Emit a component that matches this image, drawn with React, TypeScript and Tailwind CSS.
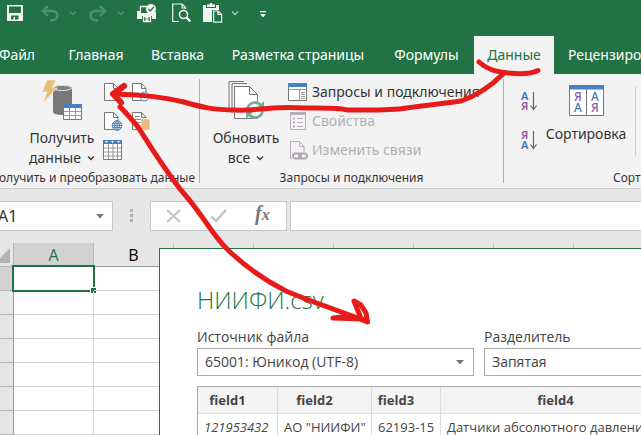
import type { ReactNode } from "react";

const tabs = [
  { label: "Файл", className: "w-[54px] pr-5" },
  { label: "Главная", className: "w-[84px]" },
  { label: "Вставка", className: "w-[79px]" },
  { label: "Разметка страницы", className: "w-[162px]" },
  { label: "Формулы", className: "w-[95px]" },
  { label: "Данные", className: "w-[80px]", active: true },
  { label: "Рецензирование", className: "px-3.5" },
];

const Chevron = ({ className = "" }: { className?: string }) => (
  <svg viewBox="0 0 8 6" className={`w-2 h-1.5 shrink-0 ${className}`} fill="none" stroke="currentColor" strokeWidth="1.3">
    <path d="M1 1.5l3 3 3-3" />
  </svg>
);

/* Quick access toolbar */
const QuickAccess = () => (
  <div className="flex items-center h-9 pb-2.5 pl-[7px] text-white">
    <button aria-label="Сохранить">
      <svg viewBox="0 0 16 16" className="w-4 h-4">
        <path fill="#f3f3f3" fillRule="evenodd" d="M0 0h16v16H0zM2 1.500v6.500h12v-6.500zM4 10.500v4h2.500v-2.500h1.500v2.500h3.500v-4z" />
      </svg>
    </button>
    <button aria-label="Отменить" className="flex items-center gap-2.5 ml-[18px] text-[#4f8f6b]">
      <svg viewBox="0 0 18 17" className="w-[18px] h-[17px]" fill="none" stroke="currentColor" strokeWidth="2.4">
        <path d="M7 1L2 6l5 5M2 6h9c3.500 0 5.500 2 5.500 4.800S14 15.500 9 15.500" />
      </svg>
      <Chevron />
    </button>
    <button aria-label="Вернуть" className="flex items-center gap-2.5 ml-3 text-[#4f8f6b]">
      <svg viewBox="0 0 18 17" className="w-[18px] h-[17px]" fill="none" stroke="currentColor" strokeWidth="2.4">
        <path d="M11 1l5 5-5 5M16 6H7C3.500 6 1.500 8 1.500 10.800S4 15.500 9 15.500" />
      </svg>
      <Chevron />
    </button>
    <button aria-label="Быстрая печать" className="ml-3">
      <svg viewBox="0 0 20 19" className="w-5 h-[19px]">
        <path fill="#f3f3f3" d="M0 7h4v2h11v-1h4v7h-4v-3H5v3H0z" />
        <path fill="none" stroke="#f3f3f3" strokeWidth="1.3" d="M3.500 7V2.500H10M6.500 12.500h7v5h-7zM8.500 14h3M8.500 16h3" />
        <circle cx="14" cy="5" r="5" fill="#f3f3f3" />
        <path fill="none" stroke="#217346" strokeWidth="1.4" d="M11.300 5l2 2 3.500-4" />
      </svg>
    </button>
    <button aria-label="Предварительный просмотр" className="ml-[15px]">
      <svg viewBox="0 0 19 20" className="w-[19px] h-5" fill="none" stroke="#f3f3f3">
        <path strokeWidth="1.2" d="M7 18.500H.700V1H10l3.500 3.500V6M10 1v4h4" />
        <circle cx="11.500" cy="11.500" r="4" strokeWidth="1.600" />
        <path strokeWidth="2.400" d="M14.500 14.500l3.700 4" />
      </svg>
    </button>
    <button aria-label="Вставить" className="flex items-center gap-2 ml-3">
      <svg viewBox="0 0 20 20" className="w-5 h-5">
        <path fill="#f3f3f3" d="M0 2h3v3h10V2h3v5H9v12H0z" />
        <path fill="#f3f3f3" d="M4 1.500h2.500C6.500-.5 9.500-.5 9.500 1.500H12V4H4z" />
        <path fill="none" stroke="#f3f3f3" strokeWidth="1.2" d="M10.600 8h4.500l3.500 3.500v7.700h-8zM15 8v3.500h3.500" />
      </svg>
      <Chevron className="text-[#a9cbb8]" />
    </button>
    <button aria-label="Настройка панели" className="ml-5">
      <svg viewBox="0 0 8 8" className="w-2 h-2 mt-1" fill="#f3f3f3">
        <path d="M1 0h6v1.200H1zM1 3h6L4 6.500z" />
      </svg>
    </button>
  </div>
);

const Group = ({ label, className, labelClass, children }: { label: string; className: string; labelClass: string; children: ReactNode }) => (
  <section className={`flex flex-col h-full ${className}`}>
    <div className="flex h-[94px] pt-1.5">{children}</div>
    <div className={`flex text-xs leading-5 whitespace-nowrap ${labelClass}`}>
      <span>{label}</span>
    </div>
  </section>
);

const Divider = () => <div className="w-px h-[104px] mt-[5px] bg-[#b0b0b0] shrink-0" />;

const DatabaseIcon = () => (
  <svg viewBox="0 0 40 40" className="w-10 h-10">
    <path fill="#787878" d="M11 8c0-4 19-4 19 0v24c0 4-19 4-19 0z" />
    <ellipse cx="20.500" cy="8" rx="9" ry="2.500" fill="#808080" stroke="#e8e8e8" />
    <path fill="#e9bd75" stroke="#f3f3f3" strokeWidth=".6" d="M5 0h9l-4 8h5L1 23l4-11H0z" />
    <path fill="#fff" stroke="#787878" d="M21.500 24.500h18v15h-18z" />
    <path fill="#4a80bd" d="M21 24h19v4H21z" />
    <path stroke="#999" d="M27.500 28v11M33.500 28v11M22 31.500h17M22 35.500h17" />
  </svg>
);

const PageIcon = ({ children }: { children?: ReactNode }) => (
  <svg viewBox="0 0 20 20" className="w-5 h-5">
    <path fill="#fff" stroke="#777" d="M1.500 1.500h9l4.500 4.500v12.500h-13.500zM10.500 1.500v5h4.500" />
    {children}
  </svg>
);

const TableIcon = () => (
  <svg viewBox="0 0 20 20" className="w-5 h-5">
    <path fill="#fff" stroke="#777" d="M.5.5h18v19H.5z" />
    <path fill="#4a80bd" d="M0 0h19v4H0z" />
    <path fill="#fff" d="M2 1h3L3.500 3zM8 1h3L9.500 3zM14 1h3l-1.500 2z" />
    <path stroke="#999" d="M5.500 4v15M10 4v15M14.500 4v15M1 8h17M1 12h17M1 16h17" />
  </svg>
);

const RefreshIcon = () => (
  <svg viewBox="0 0 38 40" className="w-[38px] h-10" fill="none">
    <path stroke="#777" d="M2 28V1.500h15M5 33V3.500h15" />
    <path fill="#fff" stroke="#777" d="M7.500 6.500h15l8 8v24h-23zM22.500 6.500v8h8" />
    <circle cx="28" cy="30" r="8.500" fill="#f3f3f3" />
    <path stroke="#74ab95" strokeWidth="2.600" d="M20.500 30c0-8 10-10 14-4M35.500 30c0 8-10 10-14 4" />
    <path fill="#74ab95" d="M37 21v8h-8zM19 39v-8h8z" />
  </svg>
);

const QueriesIcon = () => (
  <svg viewBox="0 0 20 20" className="w-5 h-5">
    <path fill="#fff" stroke="#777" d="M.5 1.500h18v17H.5z" />
    <path fill="#4a80bd" d="M0 1h19v4H0z" />
    <path stroke="#999" d="M1 7.500h17M11.500 8v10M13 10.500h4M13 12.500h4M13 14.500h4M13 16.500h4" />
  </svg>
);

const PropertiesIcon = () => (
  <svg viewBox="0 0 20 20" className="w-5 h-5">
    <path fill="#f7f4f8" stroke="#b5b0b5" d="M2.500 1.500h15v17h-15z" />
    <path fill="#b5b0b5" d="M2 1h16v3H2z" />
    <path stroke="#b5b0b5" d="M9 7.500h6M9 11.500h6M9 15.500h6" />
    <path fill="#b5b0b5" d="M5 6.500h2v2H5zM5 10.500h2v2H5zM5 14.500h2v2H5z" />
  </svg>
);

const LinksIcon = () => (
  <svg viewBox="0 0 20 20" className="w-5 h-5" fill="none">
    <path fill="#f7f2f8" stroke="#b5b0b5" d="M4 18.500H2.500v-17h9l4.500 4.500v6M11.500 1.500v5H16" />
    <rect x="5" y="13.500" width="8" height="5" rx="2.500" stroke="#aaa" strokeWidth="1.800" />
    <rect x="11" y="13.500" width="8" height="5" rx="2.500" stroke="#aaa" strokeWidth="1.800" />
  </svg>
);

const SortIcon = ({ down = false }: { down?: boolean }) => (
  <svg viewBox="0 0 18 20" className="w-[18px] h-5" fontFamily="Noto Sans, sans-serif" fontSize="11" fontWeight="600">
    <text x="1" y="9" fill={down ? "#8d55a8" : "#3f76b5"}>{down ? "Я" : "А"}</text>
    <text x="1" y="19" fill={down ? "#3f76b5" : "#8d55a8"}>{down ? "А" : "Я"}</text>
    <path d="M13.500 1v17M10.500 14.500l3 4 3-4" fill="none" stroke="#666" strokeWidth="1.200" />
  </svg>
);

const SortDialogIcon = () => (
  <svg viewBox="0 0 35 31" className="w-[35px] h-[31px]" fontFamily="Noto Sans, sans-serif" fontSize="12" fontWeight="500" textAnchor="middle">
    <path fill="#fff" stroke="#777" d="M.5.5h34v30H.5zM17.500 4v26" />
    <path fill="#4a80bd" d="M0 0h35v4.500H0z" />
    <text x="9" y="16" fill="#8d55a8">Я</text>
    <text x="9" y="27" fill="#3f76b5">А</text>
    <text x="26" y="16" fill="#3f76b5">А</text>
    <text x="26" y="27" fill="#8d55a8">Я</text>
  </svg>
);

const Ribbon = () => (
  <div className="flex h-[115px] bg-[#f3f3f3] border-b border-[#d0d0d0] text-sm text-[#333] overflow-hidden">
    <Group label="Получить и преобразовать данные" className="w-[199px] shrink-0" labelClass="justify-end pr-1">
      <button className="flex flex-col items-center w-[70px] ml-[27px]">
        <DatabaseIcon />
        <span className="leading-5 mt-2">Получить</span>
        <span className="flex items-center gap-1.5 leading-5">
          данные
          <Chevron />
        </span>
      </button>
      <div className="grid grid-cols-2 gap-x-2 gap-y-[9px] content-start ml-1.5 pt-0.5">
        <button aria-label="Из текстового файла">
          <PageIcon />
        </button>
        <button aria-label="Последние источники">
          <PageIcon>
            <circle cx="13.500" cy="14.500" r="4.500" fill="#fff" stroke="#4a80bd" />
            <path d="M13.500 12v3h2.500" fill="none" stroke="#4a80bd" />
          </PageIcon>
        </button>
        <button aria-label="Из Интернета">
          <PageIcon>
            <circle cx="14" cy="14.500" r="4.800" fill="#fff" stroke="#4a80bd" />
            <path d="M9 14.500h10M14 10v9M10 12.500h8M10 16.500h8" stroke="#4a80bd" />
            <ellipse cx="14" cy="14.500" rx="2.300" ry="4.500" fill="none" stroke="#4a80bd" />
          </PageIcon>
        </button>
        <button aria-label="Существующие подключения">
          <PageIcon>
            <path d="M4 5.500h5M4 8.500h8M4 11.500h6M4 14.500h6" stroke="#888" />
            <path d="M10 9c0-2 9-2 9 0v9c0 2-9 2-9 0z" fill="#e9bd75" stroke="#f3f3f3" />
          </PageIcon>
        </button>
        <button aria-label="Из таблицы">
          <TableIcon />
        </button>
      </div>
    </Group>
    <Divider />

    <Group label="Запросы и подключения" className="w-[303px] shrink-0" labelClass="justify-center">
      <button className="flex flex-col items-center w-[70px] ml-[11px]">
        <RefreshIcon />
        <span className="leading-5 mt-2">Обновить</span>
        <span className="flex items-center gap-1.5 leading-5">
          все
          <Chevron />
        </span>
      </button>
      <div className="flex flex-col gap-[9px] ml-[7px] pt-0.5 leading-5 whitespace-nowrap">
        <button className="flex gap-1">
          <QueriesIcon />
          Запросы и подключения
        </button>
        <button className="flex gap-1 text-[#b1b1b1]" disabled>
          <PropertiesIcon />
          Свойства
        </button>
        <button className="flex gap-1 text-[#b1b1b1]" disabled>
          <LinksIcon />
          Изменить связи
        </button>
      </div>
    </Group>
    <Divider />

    <Group label="Сортировка и фильтр" className="flex-1 min-w-0" labelClass="pl-[109px]">
      <div className="flex flex-col gap-[19px] ml-4 pt-[11px] shrink-0">
        <button aria-label="Сортировка от А до Я">
          <SortIcon />
        </button>
        <button aria-label="Сортировка от Я до А">
          <SortIcon down />
        </button>
      </div>
      <button className="flex flex-col items-center w-[84px] ml-1.5 pt-[5px] shrink-0">
        <SortDialogIcon />
        <span className="leading-5 mt-2">Сортировка</span>
      </button>
      <div className="w-px h-[70px] mt-1.5 ml-[7px] bg-[#d0d0d0] shrink-0" />
    </Group>
  </div>
);

const FormulaBar = () => (
  <div className="flex h-[54px] pt-3 bg-[#e6e6e6] shrink-0">
    <div className="flex items-center w-[113px] h-[30px] bg-white border border-l-0 border-[#c6c6c6] pr-2">
      <input aria-label="Поле имени" defaultValue="A1" className="w-full min-w-0 -ml-0.5 text-base text-[#333] outline-none" />
      <svg viewBox="0 0 8 5" className="w-2 h-[5px] shrink-0" fill="#777">
        <path d="M0 0h8L4 4.500z" />
      </svg>
    </div>
    <div className="flex flex-col gap-0.5 ml-[17px] mt-2">
      <i className="w-[3px] h-[3px] bg-[#b0b0b0]" />
      <i className="w-[3px] h-[3px] bg-[#b0b0b0]" />
      <i className="w-[3px] h-[3px] bg-[#b0b0b0]" />
    </div>
    <div className="flex items-center w-[137px] h-[30px] ml-[17px] pl-[15px] bg-white border border-[#c6c6c6]">
      <button aria-label="Отмена">
        <svg viewBox="0 0 15 14" className="w-[15px] h-3.5" stroke="#c4c4c4" strokeWidth="2">
          <path d="M1 1l13 12M14 1L1 13" />
        </svg>
      </button>
      <button aria-label="Ввод" className="ml-[29px]">
        <svg viewBox="0 0 17 14" className="w-[17px] h-3.5" fill="none" stroke="#c4c4c4" strokeWidth="2.600">
          <path d="M1 7.500l5 4.500L16 1" />
        </svg>
      </button>
      <button aria-label="Вставить функцию" className="ml-7 -mt-1 font-['Liberation_Serif',serif] italic font-bold text-xl leading-6 text-[#777]">
        f<span className="text-base">x</span>
      </button>
    </div>
    <input aria-label="Строка формул" className="flex-1 min-w-0 h-[30px] ml-[3px] bg-white border border-r-0 border-[#c6c6c6] outline-none" />
  </div>
);

const columns = ["A", "B", "", "", "", "", "", ""];
const rows = [1, 2, 3, 4, 5, 6, 7, 8];

const Sheet = () => (
  <table className="w-[654px] table-fixed border-separate border-spacing-0 bg-white">
    <thead>
      <tr className="h-6 bg-[#e6e6e6] text-base leading-5 text-black">
        <th className="w-3.5 p-0 border-r border-b border-[#b5b5b5]">
          <svg viewBox="0 0 13 20" className="w-[13px] h-5">
            <path d="M10 3v15H-5z" fill="#b5b5b5" />
          </svg>
        </th>
        {columns.map((name, i) => (
          <th
            key={i}
            className={`w-20 p-0 font-normal border-b font-['Open_Sans',sans-serif] border-r ${
              i === 0 ? "bg-[#d2d2d2] text-[#217346] border-r-[#b5b5b5] border-b-[#217346]" : "border-r-[#c6c6c6] border-b-[#999]"
            }`}
          >
            {name}
          </th>
        ))}
      </tr>
    </thead>
    <tbody>
      {rows.map((row) => (
        <tr key={row} className="h-6">
          <th className={`p-0 border-r border-b border-r-[#999] border-b-[#b5b5b5] ${row === 1 ? "bg-[#d2d2d2]" : "bg-[#e6e6e6]"}`} />
          {columns.map((_, i) => (
            <td key={i} className="relative p-0 border-r border-b border-[#d4d4d4]">
              {row === 1 && i === 0 && (
                <div className="absolute -left-0.5 -top-0.5 -right-0.5 -bottom-0.5 border-2 border-[#217346]">
                  <i className="absolute -right-[3px] -bottom-[3px] w-1.5 h-1.5 bg-[#217346] border-l border-t border-white" />
                </div>
              )}
            </td>
          ))}
        </tr>
      ))}
    </tbody>
  </table>
);

const Field = ({ id, label, value, className }: { id: string; label: string; value: string; className: string }) => (
  <div className={`flex flex-col shrink-0 ${className}`}>
    <label htmlFor={id} className="leading-5 mb-px">
      {label}
    </label>
    <div className="relative">
      <select id={id} className="appearance-none w-full h-7 pl-[7px] bg-white border border-[#ababab] outline-none">
        <option>{value}</option>
      </select>
      <svg viewBox="0 0 8 5" className="absolute right-2.5 top-3 w-2 h-[5px] pointer-events-none" fill="#777">
        <path d="M0 0h8L4 4.500z" />
      </svg>
    </div>
  </div>
);

const preview = [
  { name: "field1", value: "121953432", width: "w-20", cell: "italic" },
  { name: "field2", value: 'АО "НИИФИ"', width: "w-[94px]", cell: "" },
  { name: "field3", value: "62193-15", width: "w-[69px]", cell: "" },
  { name: "field4", value: "Датчики абсолютного давления", width: "w-[250px]", cell: "" },
];

const ImportDialog = () => (
  <div role="dialog" aria-label="НИИФИ.csv" className="absolute left-[159px] right-0 top-[5px] bottom-0 pl-[37px] bg-white border-l border-t border-[#217346] overflow-hidden text-sm text-[#444] font-['Open_Sans','Noto_Sans',sans-serif]">
    <h1 className="mt-[35px] text-2xl leading-8 font-light text-[#217346]">НИИФИ.csv</h1>
    <div className="flex gap-2.5 mt-[11px]">
      <Field id="source" label="Источник файла" value="65001: Юникод (UTF-8)" className="w-[277px]" />
      <Field id="delimiter" label="Разделитель" value="Запятая" className="w-[277px]" />
    </div>
    <table className="w-[494px] mt-2.5 table-fixed border-separate border-spacing-0 border-l border-t border-[#ababab] whitespace-nowrap text-[13px]">
      <thead>
        <tr className="h-[27px] bg-[#f4f4f4]">
          {preview.map((col) => (
            <th key={col.name} className={`p-0 pr-5 border-r border-b border-[#dcdcdc] font-bold text-[13px] ${col.width}`}>
              {col.name}
            </th>
          ))}
        </tr>
      </thead>
      <tbody>
        <tr className="h-[26px]">
          {preview.map((col) => (
            <td key={col.name} className={`p-0 pl-1.5 border-r border-[#dcdcdc] ${col.cell}`}>
              {col.value}
            </td>
          ))}
        </tr>
      </tbody>
    </table>
  </div>
);

/* Red pen strokes over the window */
const Annotation = () => (
  <svg viewBox="0 0 641 435" className="absolute left-0 top-0 w-[641px] h-[435px] pointer-events-none" fill="none" stroke="#e81b1b" strokeWidth="5" strokeLinecap="round" strokeLinejoin="round">
    <path d="M479 62c10 9 22 11 36 11.500 9 .5 17 0 23-3" />
    <path d="M503 74c-9 9-22 20-42 27-12 2-34 4-54 7-20 3-42 2-60 2-6-2-18-2-32-2-18 0-28-1-42 0-14 1-26 3-38 2-22 0-34-3-51-8-18-4-34-7-71-8" />
    <path strokeWidth="6" d="M124 86l-11 8 8 8.500" />
    <path d="M120 107c5 4 11 12 18 20 16 25 32 51 48 69 18 21 28 41 42 54 20 19 36 30 58 41 26 11 56 21 80 30" />
    <path fill="#e81b1b" d="M333 318l13-1.500 16 2.500z" />
    <path d="M354 301l7 4 5 8 1.500 9-6-2.500z" />
  </svg>
);

export default function App() {
  return (
    <div className="relative flex flex-col min-h-screen overflow-hidden bg-white font-['Noto_Sans','Open_Sans',sans-serif]">
      <header className="bg-[#217346]">
        <QuickAccess />
        <nav className="flex h-[38px] text-sm text-white whitespace-nowrap overflow-hidden">
          {tabs.map((tab) => (
            <button key={tab.label} className={`shrink-0 flex items-center justify-center ${tab.className} ${tab.active ? "bg-[#f3f3f3] text-[#217346]" : ""}`}>
              {tab.label}
            </button>
          ))}
        </nav>
      </header>
      <Ribbon />
      <FormulaBar />
      <main className="relative h-48 overflow-hidden">
        <Sheet />
        <ImportDialog />
      </main>
      <Annotation />
    </div>
  );
}
